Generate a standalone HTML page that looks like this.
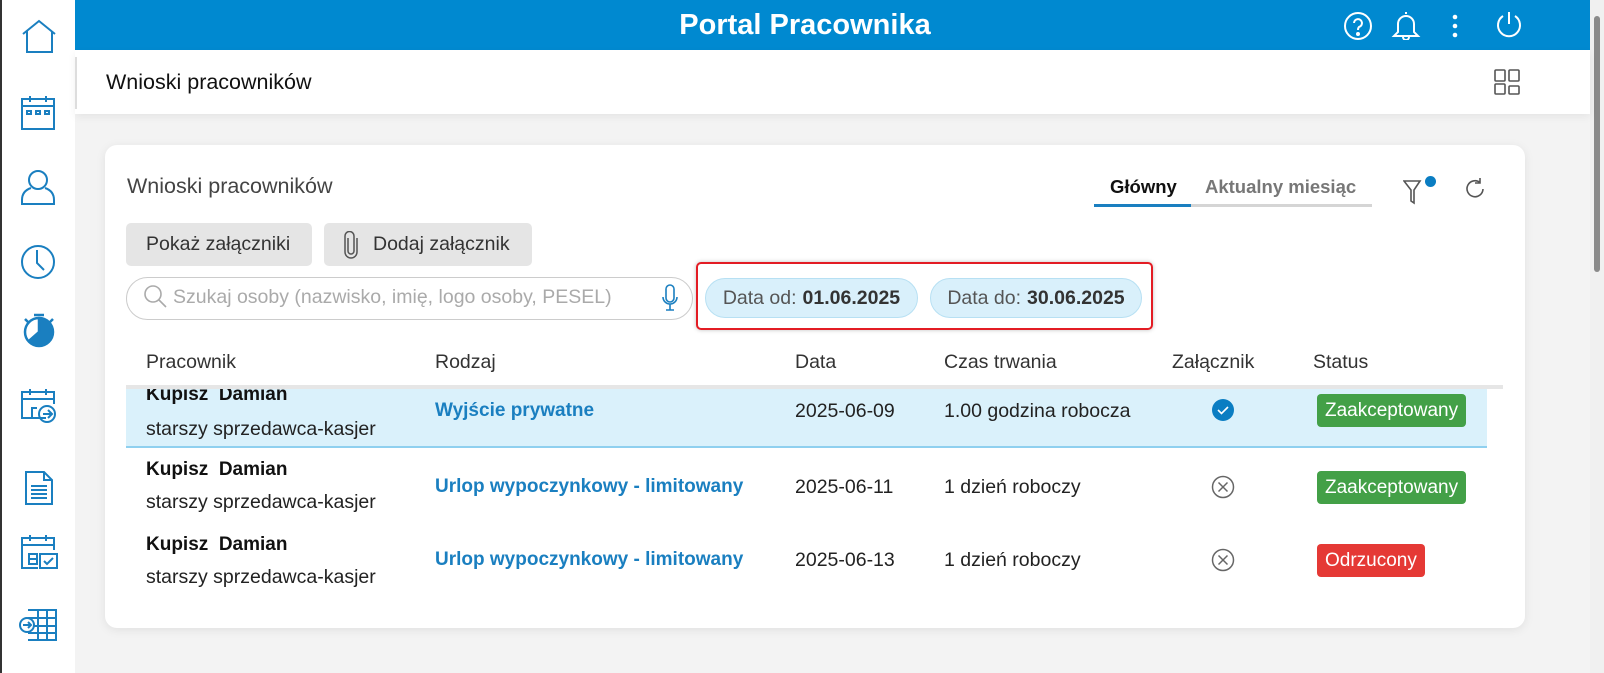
<!DOCTYPE html>
<html><head><meta charset="utf-8"><style>
*{margin:0;padding:0;box-sizing:border-box}
body{width:1604px;height:673px;overflow:hidden;background:#f3f3f3;font-family:"Liberation Sans",sans-serif;position:relative;color:#222}
.a{position:absolute;white-space:nowrap}
.side{left:0;top:0;width:75px;height:673px;background:#fff;border-left:2px solid #333}
.hdr{left:75px;top:0;width:1515px;height:50px;background:#0089d0}
.sub{left:75px;top:50px;width:1515px;height:64px;background:#fff;box-shadow:0 3px 8px rgba(0,0,0,.06)}
.card{left:105px;top:145px;width:1420px;height:483px;background:#fff;border-radius:12px;box-shadow:0 2px 10px rgba(0,0,0,.08)}
.btn{background:#e5e5e5;border-radius:5px;height:43px;top:223px;font-size:19.5px;color:#333;line-height:43px}
.pill{top:278px;height:40px;border-radius:20px;background:#d9f0fb;border:1px solid #b7e0f3;font-size:19.5px;line-height:38px;color:#555;text-align:center}
.pill b{color:#333;margin-left:6px}
.th{top:351px;font-size:19.5px;color:#333}
.t{font-size:19.5px;color:#222}
.bd{font-weight:bold;font-size:19px;color:#111}
.lnk{font-size:19px;color:#1a7fc0;font-weight:bold}
.badge{height:33px;line-height:33px;border-radius:4px;color:#fff;font-size:19px;padding:0 8px}
svg{position:absolute}
</style></head><body>
<div class="a side"></div>
<svg style="left:20px;top:18px" width="38" height="36" viewBox="0 0 38 36" fill="none" stroke="#1a7fc0" stroke-width="2"><path d="M3 16L19 3L35 16M7 13V34H32V13"/></svg>
<svg style="left:20px;top:95px" width="36" height="36" viewBox="0 0 36 36" fill="none" stroke="#1a7fc0" stroke-width="2"><rect x="2" y="4" width="32" height="30"/><path d="M2 11H34M10 1V7M26 1V7"/><rect x="7" y="16" width="4" height="3"/><rect x="16" y="16" width="4" height="3"/><rect x="25" y="16" width="4" height="3"/></svg>
<svg style="left:20px;top:168px" width="36" height="38" viewBox="0 0 36 38" fill="none" stroke="#1a7fc0" stroke-width="2"><circle cx="18" cy="12" r="9"/><path d="M11 20C5 22 2 26 2 32V36H34V32C34 26 31 22 25 20"/></svg>
<svg style="left:20px;top:244px" width="36" height="36" viewBox="0 0 36 36" fill="none" stroke="#1a7fc0" stroke-width="2"><circle cx="18" cy="18" r="16"/><path d="M17 6V19L24 26"/></svg>
<svg style="left:22px;top:312px" width="34" height="36" viewBox="0 0 34 36" fill="none" stroke="#1a7fc0" stroke-width="2.5"><circle cx="17" cy="20" r="14"/><path d="M12 3H22M3 7L6 10M31 7L28 10"/><path d="M17 20V8A12 12 0 1 1 8 28Z" fill="#1a7fc0"/></svg>
<svg style="left:20px;top:388px" width="38" height="36" viewBox="0 0 38 36" fill="none" stroke="#1a7fc0" stroke-width="2"><path d="M26 30H2V4H34V16M2 11H34M10 1V7M26 1V7M12 30V20H17"/><circle cx="27" cy="26" r="8"/><path d="M23 26H31M28 22L32 26L28 30"/></svg>
<svg style="left:24px;top:470px" width="30" height="36" viewBox="0 0 30 36" fill="none" stroke="#1a7fc0" stroke-width="2"><path d="M2 2H20L28 10V34H2Z M20 2V10H28"/><path d="M7 16H23M7 20H23M7 24H23M7 28H23"/></svg>
<svg style="left:20px;top:532px" width="38" height="40" viewBox="0 0 38 40" fill="none" stroke="#1a7fc0" stroke-width="2"><path d="M18 36H2V6H34V18M2 13H34M10 3V9M26 3V9"/><rect x="9" y="22" width="8" height="10"/><path d="M9 27H17"/><rect x="20" y="22" width="17" height="14"/><path d="M24 29L27 32L33 26"/></svg>
<svg style="left:18px;top:608px" width="40" height="34" viewBox="0 0 40 34" fill="none" stroke="#1a7fc0" stroke-width="2"><path d="M10 2H38V32H10M10 10H38M10 18H38M10 25H38M20 2V32M29 2V32"/><circle cx="9" cy="17" r="7" fill="#fff"/><path d="M5 17H13M10 14L13 17L10 20"/></svg>
<div class="a hdr"></div>
<div class="a" style="left:605px;width:400px;top:9px;text-align:center;color:#fff;font-weight:bold;font-size:29px">Portal Pracownika</div>
<svg style="left:1343px;top:11px" width="30" height="30" viewBox="0 0 30 30" fill="none" stroke="#fff" stroke-width="2"><circle cx="15" cy="15" r="13"/><path d="M11 12A4 4 0 1 1 16 16C15 17 15 18 15 19"/><circle cx="15" cy="23" r="1" fill="#fff"/></svg>
<svg style="left:1391px;top:10px" width="30" height="30" viewBox="0 0 30 30" fill="none" stroke="#fff" stroke-width="2"><path d="M15 2V4M7 22V14A8 8 0 0 1 23 14V22L27 26H3Z M12 27A3 3 0 0 0 18 27"/></svg>
<svg style="left:1450px;top:13px" width="10" height="26"><circle cx="5" cy="4" r="2.3" fill="#fff"/><circle cx="5" cy="13" r="2.3" fill="#fff"/><circle cx="5" cy="22" r="2.3" fill="#fff"/></svg>
<svg style="left:1494px;top:10px" width="30" height="30" viewBox="0 0 30 30" fill="none" stroke="#fff" stroke-width="2"><path d="M15 2V14M9 6A11 11 0 1 0 21 6"/></svg>
<div class="a" style="left:1590px;top:0;width:14px;height:673px;background:#f0f0f0"></div>
<div class="a" style="left:1594px;top:16px;width:6px;height:256px;background:#8a8a8a;border-radius:3px"></div>
<div class="a sub"></div>
<div class="a" style="left:75px;top:57px;width:2px;height:52px;background:#ddd"></div>
<div class="a" style="left:106px;top:70px;font-size:21.5px;color:#111">Wnioski pracowników</div>
<svg style="left:1494px;top:69px" width="26" height="26" viewBox="0 0 26 26" fill="none" stroke="#555" stroke-width="1.6"><rect x="1" y="1" width="10" height="11" rx="1"/><rect x="15" y="1" width="10" height="11" rx="1"/><rect x="1" y="15" width="10" height="10" rx="1"/><rect x="15" y="17" width="10" height="8" rx="1"/></svg>
<div class="a card"></div>
<div class="a" style="left:127px;top:174px;font-size:21.5px;color:#444">Wnioski pracowników</div>
<div class="a" style="left:1110px;top:176px;font-size:18.5px;font-weight:bold;color:#111">Główny</div>
<div class="a" style="left:1205px;top:176px;font-size:18.5px;font-weight:bold;color:#777">Aktualny miesiąc</div>
<div class="a" style="left:1094px;top:204px;width:278px;height:3px;background:#d5d5d5"></div>
<div class="a" style="left:1094px;top:204px;width:97px;height:3px;background:#1a7fc0"></div>
<svg style="left:1403px;top:178px" width="22" height="28" viewBox="0 0 22 28" fill="none" stroke="#555" stroke-width="1.6"><path d="M1 3H17L11 12V25L8 23V12Z"/></svg>
<div class="a" style="left:1425px;top:176px;width:11px;height:11px;border-radius:50%;background:#0a7dc2"></div>
<svg style="left:1463px;top:177px" width="24" height="24" viewBox="0 0 24 24" fill="none" stroke="#555" stroke-width="1.6"><path d="M20 12A8 8 0 1 1 17 5.5M17 1V6H12"/></svg>
<div class="a btn" style="left:126px;width:186px;padding-left:20px">Pokaż załączniki</div>
<div class="a btn" style="left:324px;width:208px;padding-left:49px">Dodaj załącznik</div>
<svg style="left:343px;top:231px" width="16" height="28" viewBox="0 0 16 28" fill="none" stroke="#555" stroke-width="1.5"><path d="M5 7V20A3 3 0 0 0 11 20V5A4.5 4.5 0 0 0 2 5V21A6 6 0 0 0 14 21V7"/></svg>
<div class="a" style="left:126px;top:277px;width:567px;height:43px;border:1px solid #ccc;border-radius:22px"></div>
<svg style="left:143px;top:284px" width="26" height="26" viewBox="0 0 26 26" fill="none" stroke="#aaa" stroke-width="1.6"><circle cx="10" cy="10" r="8"/><path d="M16 16L23 23"/></svg>
<div class="a" style="left:173px;top:286px;font-size:19.5px;color:#aaa">Szukaj osoby (nazwisko, imię, logo osoby, PESEL)</div>
<svg style="left:661px;top:284px" width="18" height="28" viewBox="0 0 18 28" fill="none" stroke="#1a7fc0" stroke-width="1.6"><rect x="5" y="1" width="8" height="17" rx="4"/><path d="M2 13A7 7 0 0 0 16 13M9 20V26M5 26H13"/></svg>
<div class="a" style="left:696px;top:262px;width:457px;height:68px;border:2px solid #e31c24;border-radius:5px;box-shadow:0 0 4px rgba(0,0,0,.25)"></div>
<div class="a pill" style="left:705px;width:213px">Data od:<b>01.06.2025</b></div>
<div class="a pill" style="left:930px;width:212px">Data do:<b>30.06.2025</b></div>
<div class="a th" style="left:146px">Pracownik</div>
<div class="a th" style="left:435px">Rodzaj</div>
<div class="a th" style="left:795px">Data</div>
<div class="a th" style="left:944px">Czas trwania</div>
<div class="a th" style="left:1172px">Załącznik</div>
<div class="a th" style="left:1313px">Status</div>
<div class="a" style="left:126px;top:388px;width:1361px;height:60px;background:#daf1fb;border-bottom:2px solid #8fd0ef;overflow:hidden">
<div class="a bd" style="left:20px;top:-4px">Kupisz&nbsp; Damian</div></div>
<div class="a" style="left:126px;top:385px;width:1377px;height:4px;background:#e6e6e6"></div>
<div class="a t" style="left:146px;top:418px">starszy sprzedawca-kasjer</div>
<div class="a lnk" style="left:435px;top:400px">Wyjście prywatne</div>
<div class="a t" style="left:795px;top:400px">2025-06-09</div>
<div class="a t" style="left:944px;top:400px">1.00 godzina robocza</div>
<svg style="left:1211px;top:398px" width="24" height="24"><circle cx="12" cy="12" r="11" fill="#0a7dc2"/><path d="M7 12L10.5 15.5L17 9" stroke="#fff" stroke-width="1.6" fill="none"/></svg>
<div class="a badge" style="left:1317px;top:394px;background:#43a047">Zaakceptowany</div>
<div class="a bd" style="left:146px;top:459px">Kupisz&nbsp; Damian</div>
<div class="a t" style="left:146px;top:491px">starszy sprzedawca-kasjer</div>
<div class="a lnk" style="left:435px;top:476px">Urlop wypoczynkowy - limitowany</div>
<div class="a t" style="left:795px;top:476px">2025-06-11</div>
<div class="a t" style="left:944px;top:476px">1 dzień roboczy</div>
<svg style="left:1211px;top:475px" width="24" height="24" fill="none" stroke="#666" stroke-width="1.5"><circle cx="12" cy="12" r="10.5"/><path d="M7.5 7.5L16.5 16.5M16.5 7.5L7.5 16.5"/></svg>
<div class="a badge" style="left:1317px;top:471px;background:#43a047">Zaakceptowany</div>
<div class="a bd" style="left:146px;top:534px">Kupisz&nbsp; Damian</div>
<div class="a t" style="left:146px;top:566px">starszy sprzedawca-kasjer</div>
<div class="a lnk" style="left:435px;top:549px">Urlop wypoczynkowy - limitowany</div>
<div class="a t" style="left:795px;top:549px">2025-06-13</div>
<div class="a t" style="left:944px;top:549px">1 dzień roboczy</div>
<svg style="left:1211px;top:548px" width="24" height="24" fill="none" stroke="#666" stroke-width="1.5"><circle cx="12" cy="12" r="10.5"/><path d="M7.5 7.5L16.5 16.5M16.5 7.5L7.5 16.5"/></svg>
<div class="a badge" style="left:1317px;top:544px;background:#e53935">Odrzucony</div>
</body></html>
